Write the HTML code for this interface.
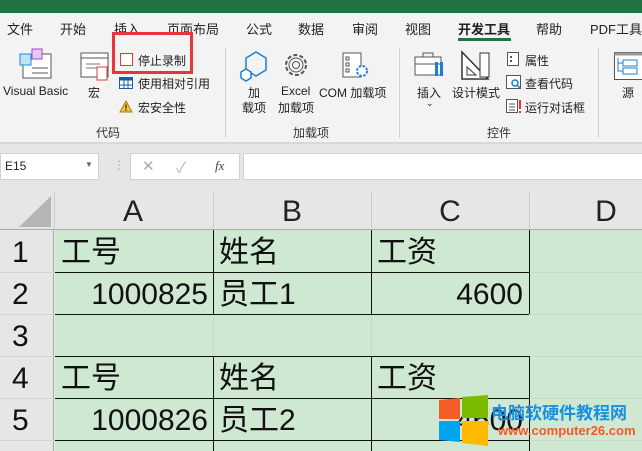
<!DOCTYPE html>
<html><head><meta charset="utf-8"><style>
*{margin:0;padding:0;box-sizing:border-box}
body{width:642px;height:451px;overflow:hidden;background:#e6e6e6;font-family:"Liberation Sans","Noto Sans CJK SC",sans-serif;position:relative;color:#222}
.a{position:absolute;white-space:nowrap}
.t{font-size:13px;top:19px}
.s{font-size:12px}
.g{font-size:12px;color:#333}
.cell{position:absolute;font-size:30px;color:#111;line-height:42px;white-space:nowrap}
.r{text-align:right}
.h{position:absolute;font-size:30px;top:193px;line-height:38px;width:40px;text-align:center}
</style></head><body>
<div class="a" style="left:0;top:0;width:642px;height:13px;background:#217346"></div>
<div class="a" style="left:0;top:13px;width:642px;height:130px;background:#f3f3f3"></div>
<div class="a t" style="left:7px">文件</div>
<div class="a t" style="left:60px">开始</div>
<div class="a t" style="left:114px">插入</div>
<div class="a t" style="left:167px">页面布局</div>
<div class="a t" style="left:246px">公式</div>
<div class="a t" style="left:298px">数据</div>
<div class="a t" style="left:352px">审阅</div>
<div class="a t" style="left:405px">视图</div>
<div class="a t" style="left:458px;font-weight:bold">开发工具</div>
<div class="a" style="left:458px;top:38px;width:53px;height:3px;background:#217346"></div>
<div class="a t" style="left:536px">帮助</div>
<div class="a t" style="left:590px">PDF工具</div>
<svg class="a" style="left:18px;top:48px" width="36" height="34"><rect x="5" y="6" width="28" height="24" fill="#fff" stroke="#555"/><line x1="14" y1="20" x2="30" y2="20" stroke="#555"/><line x1="14" y1="25" x2="30" y2="25" stroke="#555"/><rect x="2" y="6" width="11" height="11" fill="#bfe3f7" stroke="#1a8fd6"/><rect x="14" y="1" width="10" height="10" fill="#e5c7f0" stroke="#a347c7"/></svg>
<div class="a s" style="left:3px;top:84px">Visual Basic</div>
<svg class="a" style="left:80px;top:52px" width="32" height="30"><rect x="1" y="1" width="27" height="24" fill="#fff" stroke="#555"/><line x1="1" y1="6" x2="28" y2="6" stroke="#555"/><line x1="6" y1="12" x2="20" y2="12" stroke="#777"/><line x1="6" y1="16" x2="20" y2="16" stroke="#777"/><rect x="17" y="15" width="10" height="13" fill="#fff" stroke="#e33"/></svg>
<div class="a s" style="left:88px;top:84px">宏</div>
<div class="a" style="left:112px;top:32px;width:81px;height:42px;border:3px solid #e8353a"></div>
<div class="a" style="left:120px;top:53px;width:13px;height:13px;border:1px solid #e33;background:#fff"></div>
<div class="a s" style="left:138px;top:52px">停止录制</div>
<svg class="a" style="left:119px;top:77px" width="14" height="12"><rect x=".5" y=".5" width="13" height="11" fill="#fff" stroke="#1a5fa6"/><rect x=".5" y=".5" width="13" height="3" fill="#1a5fa6"/><line x1="5" y1="0" x2="5" y2="12" stroke="#1a5fa6"/><line x1="9" y1="0" x2="9" y2="12" stroke="#1a5fa6"/><line x1="0" y1="8" x2="14" y2="8" stroke="#1a5fa6"/></svg>
<div class="a s" style="left:138px;top:75px">使用相对引用</div>
<svg class="a" style="left:119px;top:100px" width="14" height="13"><path d="M7 1L13 12H1Z" fill="#f5c342" stroke="#b07a10"/><rect x="6.3" y="4.5" width="1.4" height="4" fill="#333"/><rect x="6.3" y="9.5" width="1.4" height="1.4" fill="#333"/></svg>
<div class="a s" style="left:138px;top:99px">宏安全性</div>
<div class="a g" style="left:96px;top:124px">代码</div>
<div class="a" style="left:225px;top:48px;width:1px;height:90px;background:#d0d0d0"></div>
<svg class="a" style="left:238px;top:50px" width="32" height="32"><path d="M18 2L28 8V20L18 26L8 20V8Z" fill="none" stroke="#1a7fd4" stroke-width="1.5"/><path d="M8 19L13 22V28L8 31L3 28V22Z" fill="#fff" stroke="#1a7fd4" stroke-width="1.5"/></svg>
<div class="a s" style="left:248px;top:84px">加</div>
<div class="a s" style="left:242px;top:99px">载项</div>
<svg class="a" style="left:281px;top:50px" width="30" height="30"><circle cx="15" cy="15" r="10" fill="none" stroke="#555" stroke-width="2" stroke-dasharray="4 2.3"/><circle cx="15" cy="15" r="7" fill="none" stroke="#555"/><circle cx="15" cy="15" r="3.5" fill="none" stroke="#555"/></svg>
<div class="a s" style="left:281px;top:84px">Excel</div>
<div class="a s" style="left:278px;top:99px">加载项</div>
<svg class="a" style="left:342px;top:52px" width="30" height="30"><rect x="1" y="1" width="18" height="24" fill="#fff" stroke="#555"/><rect x="4" y="5" width="3" height="3" fill="none" stroke="#555"/><rect x="4" y="11" width="3" height="3" fill="none" stroke="#555"/><rect x="4" y="17" width="3" height="3" fill="none" stroke="#555"/><circle cx="20" cy="19" r="5" fill="#fff" stroke="#1a7fd4" stroke-width="2" stroke-dasharray="2.5 1.5"/></svg>
<div class="a s" style="left:319px;top:84px">COM 加载项</div>
<div class="a g" style="left:293px;top:124px">加载项</div>
<div class="a" style="left:399px;top:48px;width:1px;height:90px;background:#d0d0d0"></div>
<svg class="a" style="left:414px;top:52px" width="32" height="30"><rect x="1" y="5" width="26" height="18" fill="#fff" stroke="#555"/><rect x="9" y="1" width="10" height="4" fill="none" stroke="#555"/><line x1="1" y1="12" x2="27" y2="12" stroke="#555"/><rect x="21" y="10" width="3" height="14" fill="#1a7fd4"/><rect x="26" y="10" width="3" height="14" fill="#1a7fd4"/></svg>
<div class="a s" style="left:417px;top:84px">插入</div>
<div class="a" style="left:426px;top:98px;font-size:9px">⌄</div>
<svg class="a" style="left:460px;top:50px" width="32" height="32"><path d="M2 2L28 29H2Z" fill="#fff" stroke="#333" stroke-width="1.5"/><path d="M7 17L16 25H7Z" fill="none" stroke="#333"/><rect x="20" y="3" width="9" height="24" fill="#fff" stroke="#333"/></svg>
<div class="a s" style="left:452px;top:84px">设计模式</div>
<svg class="a" style="left:507px;top:52px" width="14" height="14"><rect x=".5" y=".5" width="11" height="13" fill="#fff" stroke="#555"/><rect x="3" y="4" width="2" height="2" fill="#555"/><rect x="3" y="8" width="2" height="2" fill="#555"/></svg>
<div class="a s" style="left:525px;top:52px">属性</div>
<svg class="a" style="left:506px;top:75px" width="16" height="15"><rect x=".5" y=".5" width="14" height="13" fill="#fff" stroke="#555"/><circle cx="9" cy="8" r="3" fill="none" stroke="#1a7fd4" stroke-width="1.5"/><line x1="11" y1="10" x2="14" y2="13" stroke="#1a7fd4" stroke-width="1.5"/></svg>
<div class="a s" style="left:525px;top:75px">查看代码</div>
<svg class="a" style="left:506px;top:99px" width="16" height="15"><rect x=".5" y=".5" width="11" height="13" fill="#fff" stroke="#555"/><line x1="3" y1="5" x2="9" y2="5" stroke="#555"/><line x1="3" y1="8" x2="9" y2="8" stroke="#555"/><line x1="3" y1="11" x2="9" y2="11" stroke="#555"/><rect x="13" y="1" width="2" height="9" fill="#e33"/><rect x="13" y="12" width="2" height="2" fill="#e33"/></svg>
<div class="a s" style="left:525px;top:99px">运行对话框</div>
<div class="a g" style="left:487px;top:124px">控件</div>
<div class="a" style="left:598px;top:48px;width:1px;height:90px;background:#d0d0d0"></div>
<svg class="a" style="left:614px;top:52px" width="28" height="30"><rect x=".5" y=".5" width="30" height="27" fill="#fff" stroke="#555"/><rect x=".5" y=".5" width="30" height="3" fill="#999"/><rect x="9" y="8" width="14" height="6" fill="none" stroke="#1a7fd4"/><rect x="9" y="16" width="14" height="6" fill="none" stroke="#1a7fd4"/><path d="M4 6V19H9M4 11H9" fill="none" stroke="#1a7fd4"/></svg>
<div class="a s" style="left:622px;top:84px">源</div>
<div class="a" style="left:0;top:142px;width:642px;height:2px;background:#d8d8d8"></div>
<div class="a" style="left:0;top:153px;width:99px;height:27px;background:#fff;border:1px solid #d0d0d0"></div>
<div class="a" style="left:5px;top:159px;font-size:12px">E15</div>
<div class="a" style="left:85px;top:160px;font-size:8px;color:#666">▼</div>
<div class="a" style="left:113px;top:158px;font-size:12px;color:#aaa">⋮</div>
<div class="a" style="left:130px;top:153px;width:110px;height:27px;background:#fff;border:1px solid #d0d0d0"></div>
<div class="a" style="left:142px;top:157px;font-size:15px;color:#aaa">✕</div>
<div class="a" style="left:176px;top:157px;font-size:15px;color:#bbb">✓</div>
<div class="a" style="left:215px;top:158px;font-size:13px;font-style:italic;font-family:'Liberation Serif',serif;color:#444">fx</div>
<div class="a" style="left:243px;top:153px;width:400px;height:27px;background:#fff;border:1px solid #d0d0d0"></div>
<div class="a" style="left:0;top:192px;width:642px;height:38px;background:#e6e6e6;border-bottom:1px solid #aaa"></div>
<svg class="a" style="left:18px;top:196px" width="34" height="32"><path d="M33 0V31H1Z" fill="#b5b5b5"/></svg>
<div class="a" style="left:54px;top:192px;width:1px;height:38px;background:#ccc"></div>
<div class="a" style="left:213px;top:192px;width:1px;height:38px;background:#ccc"></div>
<div class="a" style="left:371px;top:192px;width:1px;height:38px;background:#ccc"></div>
<div class="a" style="left:529px;top:192px;width:1px;height:38px;background:#ccc"></div>
<div class="h" style="left:113px">A</div>
<div class="h" style="left:272px">B</div>
<div class="h" style="left:430px">C</div>
<div class="h" style="left:586px">D</div>
<div class="a" style="left:0;top:230px;width:54px;height:221px;background:#e6e6e6;border-right:1px solid #aaa"></div>
<div class="a" style="left:55px;top:230px;width:587px;height:221px;background:#cfe8d2"></div>
<svg class="a" style="left:0;top:230px" width="642" height="221">
<g stroke="#c8d8ca"><line x1="0" y1="42.5" x2="642" y2="42.5"/><line x1="0" y1="84.5" x2="642" y2="84.5"/><line x1="0" y1="126.5" x2="642" y2="126.5"/><line x1="0" y1="168.5" x2="642" y2="168.5"/><line x1="0" y1="210.5" x2="642" y2="210.5"/><line x1="213.5" y1="84" x2="213.5" y2="126"/><line x1="371.5" y1="84" x2="371.5" y2="126"/></g>
<g stroke="#111"><line x1="55" y1="42.5" x2="529" y2="42.5"/><line x1="55" y1="84.5" x2="529" y2="84.5"/><line x1="55" y1="126.5" x2="529" y2="126.5"/><line x1="55" y1="168.5" x2="529" y2="168.5"/><line x1="55" y1="210.5" x2="529" y2="210.5"/>
<line x1="213.5" y1="0" x2="213.5" y2="84"/><line x1="371.5" y1="0" x2="371.5" y2="84"/><line x1="529.5" y1="0" x2="529.5" y2="84"/>
<line x1="213.5" y1="126" x2="213.5" y2="221"/><line x1="371.5" y1="126" x2="371.5" y2="221"/><line x1="529.5" y1="126" x2="529.5" y2="221"/></g>
</svg>
<div class="cell" style="left:12px;top:232px">1</div>
<div class="cell" style="left:12px;top:274px">2</div>
<div class="cell" style="left:12px;top:316px">3</div>
<div class="cell" style="left:12px;top:358px">4</div>
<div class="cell" style="left:12px;top:400px">5</div>
<div class="cell" style="left:61px;top:232px">工号</div>
<div class="cell" style="left:219px;top:232px">姓名</div>
<div class="cell" style="left:377px;top:232px">工资</div>
<div class="cell r" style="left:55px;width:153px;top:274px">1000825</div>
<div class="cell" style="left:219px;top:274px">员工1</div>
<div class="cell r" style="left:372px;width:151px;top:274px">4600</div>
<div class="cell" style="left:61px;top:358px">工号</div>
<div class="cell" style="left:219px;top:358px">姓名</div>
<div class="cell" style="left:377px;top:358px">工资</div>
<div class="cell r" style="left:55px;width:153px;top:400px">1000826</div>
<div class="cell" style="left:219px;top:400px">员工2</div>
<div class="cell r" style="left:372px;width:151px;top:400px">4600</div>
<svg class="a" style="left:438px;top:395px" width="52" height="52"><path d="M1 5L22 3V24H1Z" fill="#f25d28"/><path d="M24 2L50 0V23H24Z" fill="#7cba00"/><path d="M1 26H22V47L1 45Z" fill="#01a4ef"/><path d="M24 26H50V51L24 48Z" fill="#ffb902"/></svg>
<div class="a" style="left:491px;top:399px;font-size:17px;font-weight:bold;color:#1a8fe0">电脑软硬件教程网</div>
<div class="a" style="left:498px;top:423px;font-size:13px;font-weight:bold;color:#f05a28">www.computer26.com</div>
</body></html>
